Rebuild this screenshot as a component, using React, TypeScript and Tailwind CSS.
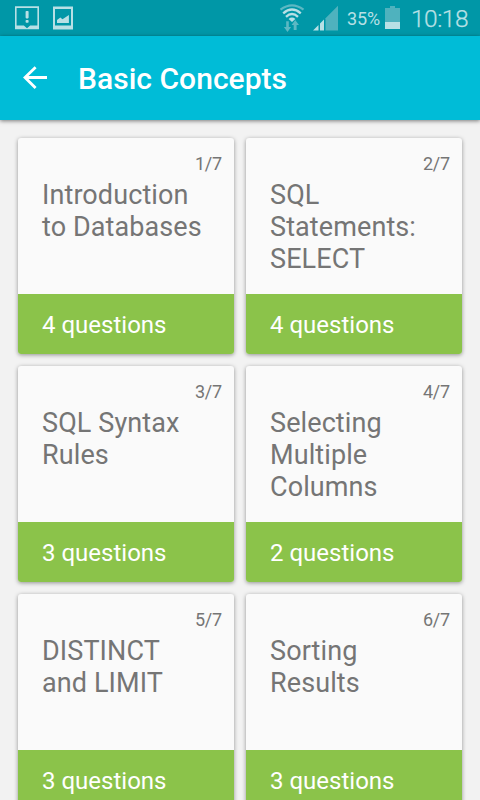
const lessons = [
  { title: ["Introduction", "to Databases"], questions: 4 },
  { title: ["SQL", "Statements:", "SELECT"], questions: 4 },
  { title: ["SQL Syntax", "Rules"], questions: 3 },
  { title: ["Selecting", "Multiple", "Columns"], questions: 2 },
  { title: ["DISTINCT", "and LIMIT"], questions: 3 },
  { title: ["Sorting", "Results"], questions: 3 },
];

const TOTAL = 7;

function StatusBar() {
  return (
    <div className="flex h-9 shrink-0 items-center bg-[#0097a7] text-[#b8e0e5]">
      <svg className="ml-[15px]" width="24" height="24" viewBox="0 0 24 24" fill="none">
        <path fill="currentColor" fillRule="evenodd" d="M0 .3h24V23.3H0zM1.6 2v17.5h7.2l3.2 2.7 3.2-2.7h7.2V2z" />
        <rect x="10.6" y="5" width="3" height="7.4" rx=".8" fill="currentColor" />
        <rect x="10.6" y="14" width="3" height="2.8" rx=".8" fill="currentColor" />
      </svg>
      <svg className="ml-[14px]" width="20" height="24" viewBox="0 0 20 24">
        <path fill="currentColor" fillRule="evenodd" d="M0 .5h20v23H0zM2 3v16.5h16V3z" />
        <path fill="currentColor" d="M4 17v-3l3.3-2.6 2.2 1.8L15.9 9v8z" />
      </svg>
      <svg className="ml-[206px]" width="26" height="30" viewBox="0 0 26 30" fill="none">
        <path stroke="#5cb8c3" strokeWidth="2.2" d="M1.5 6.6Q13 -2 24.5 6.6" />
        <path stroke="currentColor" strokeWidth="2.4" d="M4.2 10.3Q13 2.9 21.8 10.3M7 13.8Q13 8.4 19 13.8" />
        <path fill="currentColor" d="M9.6 15.9q3.4-2.8 6.8 0L13 19z" />
        <path fill="#5cb8c3" d="M7.2 18.3h2.6V24h2.3l-3.6 5-3.6-5h2.3zM14.7 27v-5h-2.1l3.6-5 3.8 5h-2.4v5z" />
      </svg>
      <svg className="ml-[8px]" width="26" height="26" viewBox="0 0 26 26">
        <path fill="#4fb2be" d="M12.5 13.2 25 .7V25.5H12.5z" />
        <path fill="currentColor" d="M0 25.5 5.5 20v5.5zM7 18.6l4-4v10.9H7z" />
      </svg>
      <span className="ml-[8px] mt-[2px] w-[34px] whitespace-nowrap text-[18px] leading-9 tracking-[-0.1px]">
        35%
      </span>
      <svg className="ml-[4px] mt-[-1px]" width="15" height="24" viewBox="0 0 15 24">
        <path fill="#4fb2be" d="M5 0h5v2h5v14H0V2h5z" />
        <path fill="currentColor" d="M0 16h15v7H0z" />
      </svg>
      <span className="ml-[11px] mt-[1px] whitespace-nowrap text-[24.5px] font-light leading-9 tracking-[-0.5px] [-webkit-text-stroke:0.25px_#b8e0e5]">
        10:18
      </span>
    </div>
  );
}

function AppBar() {
  return (
    <header className="relative flex h-[84px] shrink-0 items-center bg-[#00bcd7] text-white shadow-[0_1px_4px_rgba(0,0,0,0.5)]">
      <svg className="ml-[22px]" width="26" height="26" viewBox="0 0 26 26" fill="none" stroke="white" strokeWidth="2.8">
        <path d="M13.6 2.2 3 12.5l10.6 10.6M3 12.5h22" />
      </svg>
      <h1 className="ml-[30px] mt-[2px] whitespace-nowrap text-[30px] font-medium leading-9 tracking-[0.03px]">
        Basic Concepts
      </h1>
    </header>
  );
}

function LessonCard({ title, index, questions }: { title: string[]; index: number; questions: number }) {
  return (
    <article className="flex h-[216px] flex-col overflow-hidden rounded-[3px] bg-[#fafafa] shadow-[0_1px_4px_rgba(0,0,0,0.4)]">
      <div className="h-[156px] text-[#757575]">
        <p className="pt-[15px] pr-3 text-right text-[18px] leading-[22px] tracking-[-0.2px]">
          {index}/{TOTAL}
        </p>
        <h2 className="mt-[4px] pl-6 text-[27px] font-normal leading-8 tracking-[0.1px]">
          {title.map((line) => (
            <span key={line} className="block whitespace-nowrap">{line}</span>
          ))}
        </h2>
      </div>
      <div className="flex h-[60px] items-center bg-[#8bc34a] pt-[2px] pl-6 text-[24px] text-white">
        {questions} questions
      </div>
    </article>
  );
}

export default function App() {
  return (
    <div className="flex h-[800px] w-[480px] flex-col overflow-hidden bg-[#f2f2f2] font-['Roboto',sans-serif]">
      <StatusBar />
      <AppBar />
      <main className="grid grid-cols-2 gap-3 px-[18px] pt-[18px]">
        {lessons.map((lesson, i) => (
          <LessonCard key={i} title={lesson.title} index={i + 1} questions={lesson.questions} />
        ))}
      </main>
    </div>
  );
}
